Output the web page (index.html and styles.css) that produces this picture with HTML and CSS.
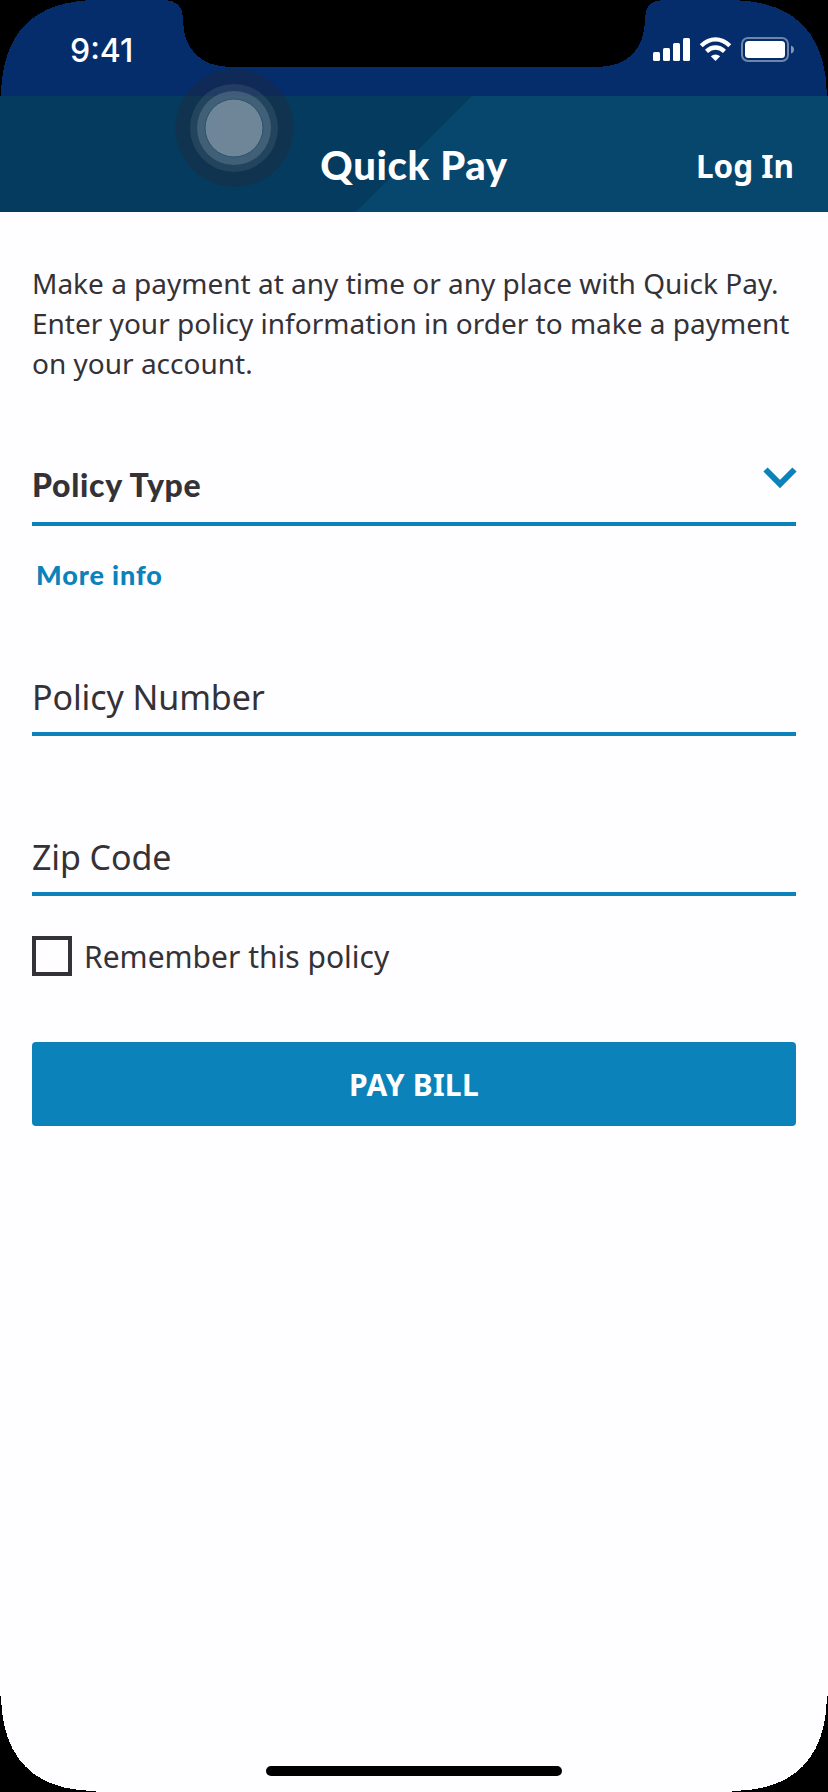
FILE: index.html
```html
<!DOCTYPE html>
<html lang="en">
<head>
<meta charset="utf-8">
<title>Quick Pay</title>
<link rel="stylesheet" href="styles.css">
</head>
<body>
<div class="screen">
  <div class="status">
    <span class="time">9:41</span>
    <svg class="indicators" width="142" height="26" viewBox="652 36 142 26" aria-hidden="true">
      <g fill="#fff">
        <rect x="653" y="52" width="7" height="9" rx="1.5"/>
        <rect x="663" y="48" width="7" height="13" rx="1.5"/>
        <rect x="673" y="43" width="7" height="18" rx="1.5"/>
        <rect x="683" y="38" width="7" height="23" rx="1.5"/>
        <path d="M715.500 61 710.800 56.300Q715.500 52.500 720.200 56.300Z"/>
      </g>
      <g fill="none" stroke="#fff" stroke-width="4.300">
        <path d="M701.200 45.700Q707.800 39.300 715.500 39.300T729.800 45.700"/>
        <path d="M706.500 51.400Q710.700 47.500 715.500 47.500T724.500 51.400"/>
      </g>
      <rect x="742" y="38" width="46" height="23" rx="6" fill="none" stroke="#fff" stroke-opacity=".42" stroke-width="2"/>
      <rect x="745" y="41" width="40" height="17" rx="3.500" fill="#fff"/>
      <path d="M791 45.500Q794 46.500 794 49.500T791 53.500Z" fill="#fff" fill-opacity=".5"/>
    </svg>
  </div>
  <header class="header">
    <h1 class="title">Quick Pay</h1>
    <a class="login">Log In</a>
  </header>
  <main class="content">
    <p class="intro">Make a payment at any time or any place with Quick Pay.<br>Enter your policy information in order to make a payment<br>on your account.</p>
    <div class="select">
      <span class="select-label">Policy Type</span>
      <svg class="chevron" width="34" height="22" viewBox="0 0 34 22" aria-hidden="true"><path d="M2.500 2.500 17 17 31.500 2.500" fill="none" stroke="#0b82ba" stroke-width="6"/></svg>
    </div>
    <a class="more">More info</a>
    <div class="field number">Policy Number</div>
    <div class="field zip">Zip Code</div>
    <label class="remember"><span class="box"></span><span class="remember-text">Remember this policy</span></label>
    <button class="pay">PAY BILL</button>
  </main>
  <svg class="frame" width="828" height="1792" viewBox="0 0 828 1792" aria-hidden="true">
    <g shape-rendering="crispEdges">
      <path d="M0 0H96C35 1 2 31 1 96H0Z"/>
      <path d="M828 0H732C793 1 826 31 827 96H828Z"/>
      <path d="M0 1696H1C2 1759 35 1791 96 1791V1792H0Z"/>
      <path d="M828 1696H827C826 1759 793 1791 732 1791V1792H828Z"/>
      <path d="M165 0C177 1 183 6 183 19C183 49 200 67 232 67H596C628 67 645 49 645 19C645 6 650 1 662 0Z"/>
    </g>
    <rect x="266" y="1766" width="296" height="10" rx="5"/>
    <circle cx="234.500" cy="128" r="59" fill="#252638" fill-opacity=".36"/>
    <circle cx="234" cy="128" r="44" fill="#567784" fill-opacity=".25"/>
    <circle cx="234" cy="128" r="37" fill="#829daf" fill-opacity=".32"/>
    <circle cx="234" cy="128" r="29" fill="#6f8699" stroke="#25546f" stroke-width="1"/>
  </svg>
</div>
</body>
</html>
```
FILE: styles.css
```css
* { box-sizing: border-box; }

body {
  margin: 0;
  background: #000;
  color: #343236;
  font-family: "Noto Sans", sans-serif;
}

.screen {
  position: relative;
  width: 828px;
  height: 1792px;
  overflow: hidden;
  background: #fefdff;
}

.status {
  display: flex;
  justify-content: space-between;
  height: 96px;
  padding: 36px 34px 0 70px;
  background: #052d6b;
  color: #fff;
}

.time {
  font: 500 32px/29px Inter, sans-serif;
}

.header {
  display: grid;
  grid-template-columns: 1fr auto 1fr;
  align-items: start;
  height: 116px;
  padding: 0 34px;
  background: linear-gradient(135deg, #053b5e 0 333.500px, #07466d 334px);
  color: #fff;
}

.title {
  grid-column: 2;
  margin: 45px 0 0;
  font: 900 40px/48px Lato, sans-serif;
  letter-spacing: .65px;
}

.login {
  justify-self: end;
  margin-top: 46px;
  font-size: 31.500px;
  font-weight: 700;
  line-height: 48px;
}

.content {
  display: flex;
  flex-direction: column;
  padding: 51px 32px 0;
}

.intro {
  margin: 0;
  font-size: 28px;
  line-height: 40px;
  white-space: nowrap;
}

.select {
  display: flex;
  justify-content: space-between;
  height: 83px;
  margin-top: 60px;
  padding-top: 22px;
  border-bottom: 4px solid #0b82ba;
}

.select-label {
  font: 900 32px/40px Lato, sans-serif;
  letter-spacing: .7px;
}

.chevron {
  margin: 2px -1px 0 0;
}

.more {
  height: 40px;
  margin: 29px 0 0 4px;
  color: #0b82ba;
  font: 900 27px/39px Lato, sans-serif;
  letter-spacing: .9px;
}

.field {
  height: 64px;
  border-bottom: 4px solid #0b82ba;
  font-size: 34px;
  letter-spacing: -.1px;
  line-height: 50px;
}

.number { margin-top: 77px; }

.zip { margin-top: 96px; }

.remember {
  display: flex;
  gap: 12px;
  height: 40px;
  margin-top: 40px;
  font-size: 30px;
  line-height: 42px;
}

.box {
  width: 40px;
  height: 40px;
  border: 4px solid #343236;
}

.pay {
  height: 84px;
  margin-top: 66px;
  padding: 2px 0 0;
  border: 0;
  border-radius: 4px;
  background: #0b82ba;
  color: #fff;
  font: 700 30px/40px "Noto Sans", sans-serif;
  letter-spacing: .25px;
}

.frame {
  position: absolute;
  inset: 0;
  pointer-events: none;
}
```
